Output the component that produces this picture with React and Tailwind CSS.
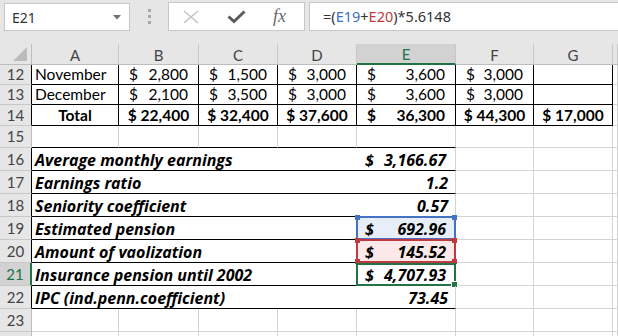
import React from "react";
import clsx from "clsx";

const grid = "grid grid-cols-[32px_87px_80px_79px_79px_99px_78px_79px_1fr]";
const font = { fontFamily: "Lato, 'Liberation Sans', sans-serif" };
const wide = { fontFamily: "'Open Sans', 'Noto Sans', sans-serif" };

// accounting format cell: $ on the left, number on the right
function Acc({ v, bold }) {
  return (
    <div className={clsx("flex h-full items-end justify-between pl-[10px] pr-[10px] pb-[1px] leading-[18px]", bold && "font-bold")}>
      <span>$</span>
      <span>{v}</span>
    </div>
  );
}

function Cell({ children, className }) {
  return <div className={clsx("border-r border-b border-[#d4d4d4] overflow-visible", className)}>{children}</div>;
}

function RowHead({ n, h, active, dark }) {
  return (
    <div
      className={clsx(
        "flex items-center justify-center border-r border-b border-b-[#c8c8c8] text-[15px] font-normal leading-none",
        h,
        active ? "bg-[#d2d2d2] text-[#217346] border-r-2 border-r-[#217346]" : "bg-[#e6e6e6] text-[#444]",
        !active && (dark ? "border-r-black" : "border-r-[#bdbdbd]")
      )}
    >
      {n}
    </div>
  );
}

function Toolbar() {
  return (
    <div className="flex h-[44px] items-start bg-[#e6e6e6] pt-[2px]" style={{ fontFamily: "'Noto Sans', 'Open Sans', sans-serif" }}>
      <div className="ml-[4px] mt-[1px] flex h-[28px] w-[126px] items-center justify-between border border-[#c6c6c6] bg-white pl-[7px] pr-[8px] text-[14px] text-[#333]">
        <span>E21</span>
        <svg width="8" height="5" viewBox="0 0 8 5">
          <path d="M0 0 L8 0 L4 4.5 Z" fill="#707070" />
        </svg>
      </div>
      <div className="flex h-[29px] w-[38px] flex-col items-center justify-center gap-[3px]">
        <div className="h-[3px] w-[3px] bg-[#a8a8a8]" />
        <div className="h-[3px] w-[3px] bg-[#a8a8a8]" />
        <div className="h-[3px] w-[3px] bg-[#a8a8a8]" />
      </div>
      <div className="flex h-[29px] w-[137px] items-center border border-[#c6c6c6] bg-white">
        <svg className="ml-[14px]" width="16" height="14" viewBox="0 0 16 14">
          <path d="M1 1 L15 13 M15 1 L1 13" stroke="#c4c4c4" strokeWidth="1.6" fill="none" />
        </svg>
        <svg className="ml-[28px]" width="19" height="14" viewBox="0 0 19 14">
          <path d="M1.5 6.5 L7 11.5 L17.5 1.5" stroke="#5a5a5a" strokeWidth="3" fill="none" />
        </svg>
        <span className="ml-[27px] text-[18px] italic text-[#6b6b6b]" style={{ fontFamily: "'Liberation Serif', serif" }}>
          fx
        </span>
      </div>
      <div className="ml-[4px] flex h-[29px] flex-1 items-center border border-r-0 border-[#c6c6c6] bg-white pl-[13px] text-[14.5px] text-[#333]">
        <span>=(</span>
        <span className="text-[#3a6fc4]">E19</span>
        <span>+</span>
        <span className="text-[#c0393f]">E20</span>
        <span>)*5.6148</span>
      </div>
    </div>
  );
}

function ColHeads() {
  const letters = ["A", "B", "C", "D", "E", "F", "G", ""];
  return (
    <div className={clsx(grid, "h-[21px] bg-[#e6e6e6] text-[15px] leading-none text-[#444]")}>
      <div className="relative border-r border-b border-[#bdbdbd]">
        <svg className="absolute right-[4px] bottom-[3px]" width="14" height="14" viewBox="0 0 14 14">
          <path d="M14 0 L14 14 L0 14 Z" fill="#bcbcbc" />
        </svg>
      </div>
      {letters.map((l, i) => (
        <div
          key={i}
          className={clsx(
            "flex items-center justify-center border-r border-[#c8c8c8] pt-[2px]",
            l === "E" ? "border-b-2 border-b-[#217346] bg-[#d2d2d2] text-[#217346]" : "border-b border-b-[#bdbdbd]"
          )}
        >
          {l}
        </div>
      ))}
    </div>
  );
}

const B = "border-r-black border-b-black";

export default function App() {
  const monthRows = [
    { n: 12, h: "h-[20px]", m: "November", v: ["2,800", "1,500", "3,000", "3,600", "3,000"] },
    { n: 13, h: "h-[20px]", m: "December", v: ["2,100", "3,500", "3,000", "3,600", "3,000"] },
  ];
  const info = [
    { n: 16, l: "Average monthly earnings", v: "$ 3,166.67", acc: true },
    { n: 17, l: "Earnings ratio", v: "1.2" },
    { n: 18, l: "Seniority coefficient", v: "0.57" },
    { n: 19, l: "Estimated pension", v: "692.96", acc: true, sel: "blue" },
    { n: 20, l: "Amount of vaolization", v: "145.52", acc: true, sel: "red" },
    { n: 21, l: "Insurance pension until 2002", v: "$ 4,707.93", acc: true, sel: "green" },
    { n: 22, l: "IPC (ind.penn.coefficient)", v: "73.45" },
  ];

  return (
    <div className="h-[336px] w-[618px] overflow-hidden bg-white text-black" style={font}>
      <Toolbar />
      <ColHeads />

      {monthRows.map((r) => (
        <div key={r.n} className={clsx(grid, r.h, "text-[15.5px]")}>
          <RowHead n={r.n} h={r.h} dark />
          <Cell className={clsx(B, "flex items-end pl-[3px] pb-[1px] leading-[18px]")}>{r.m}</Cell>
          {r.v.map((v, i) => (
            <Cell key={i} className={B}>
              <Acc v={v} />
            </Cell>
          ))}
          <Cell className={B} />
          <Cell />
        </div>
      ))}

      <div className={clsx(grid, "h-[21px] text-[15.5px] font-bold")}>
        <RowHead n={14} h="h-[21px]" dark />
        <Cell className={clsx(B, "flex items-end justify-center pb-[1px] leading-[18px]")}>Total</Cell>
        {["22,400", "32,400", "37,600"].map((v) => (
          <Cell key={v} className={clsx(B, "flex items-end justify-center pb-[1px] leading-[18px]")}>
            $ {v}
          </Cell>
        ))}
        <Cell className={B}>
          <Acc v="36,300" bold />
        </Cell>
        {["44,300", "17,000"].map((v) => (
          <Cell key={v} className={clsx(B, "flex items-end justify-center pb-[1px] leading-[18px]")}>
            $ {v}
          </Cell>
        ))}
        <Cell />
      </div>

      <div className={clsx(grid, "h-[22px] text-[15px]")}>
        <RowHead n={15} h="h-[22px]" />
        <Cell className="border-b-black" />
        <Cell className="border-b-black" />
        <Cell className="border-b-black" />
        <Cell className="border-b-black" />
        <Cell className="border-b-black" />
        <Cell />
        <Cell />
        <Cell />
      </div>

      {info.map((r) => (
        <div key={r.n} className={clsx(grid, "h-[23px]")}>
          <RowHead n={r.n} h="h-[23px]" active={r.n === 21} dark />
          <div
            className="col-span-4 flex items-end border-b border-black pl-[3px] pb-[0px] text-[16px] leading-[20px] font-bold italic"
            style={wide}
          >
            {r.l}
          </div>
          <Cell className="relative border-b-black text-[16px] leading-[20px] font-bold italic">
            {r.sel === "blue" && (
              <div className="absolute left-[-1px] right-[-1px] top-[-1.5px] bottom-[-1px] border-2 border-[#4472c4] bg-[#e8eef8]">
                <span className="absolute left-[-3px] top-[-3px] h-[5px] w-[5px] bg-[#4472c4]" />
                <span className="absolute right-[-3px] top-[-3px] h-[5px] w-[5px] bg-[#4472c4]" />
              </div>
            )}
            {r.sel === "red" && (
              <div className="absolute left-[-1px] right-[-1px] top-[-1px] bottom-[-1px] border-2 border-[#c0393f] bg-[#fbe9e9]">
                <span className="absolute left-[-3px] top-[-3px] h-[5px] w-[5px] bg-[#c0393f]" />
                <span className="absolute right-[-3px] top-[-3px] h-[5px] w-[5px] bg-[#c0393f]" />
                <span className="absolute left-[-3px] bottom-[-3px] h-[5px] w-[5px] bg-[#c0393f]" />
                <span className="absolute right-[-3px] bottom-[-3px] h-[5px] w-[5px] bg-[#c0393f]" />
              </div>
            )}
            {r.sel === "green" && (
              <div className="absolute left-[-1px] right-[-1px] top-[0px] bottom-[-1px] border-2 border-[#217346]">
                <span className="absolute right-[-3px] bottom-[-3px] h-[5px] w-[5px] bg-[#217346] outline outline-1 outline-white" />
              </div>
            )}
            <div className="relative h-full" style={wide}>
              {r.acc ? (
                <div className="flex h-full items-end justify-between pl-[8px] pr-[9px] pb-[0px]">
                  <span>$</span>
                  <span>{r.v.startsWith("$") ? r.v.slice(2) : r.v}</span>
                </div>
              ) : (
                <div className="flex h-full items-end justify-end pr-[7px] pb-[0px]">{r.v}</div>
              )}
            </div>
          </Cell>
          <Cell />
          <Cell />
          <Cell />
        </div>
      ))}

      {[23, 24].map((n) => (
        <div key={n} className={clsx(grid, "h-[23px] text-[15px]")}>
          <RowHead n={n} h="h-[23px]" />
          {Array.from({ length: 8 }).map((_, i) => (
            <Cell key={i} />
          ))}
        </div>
      ))}
    </div>
  );
}
